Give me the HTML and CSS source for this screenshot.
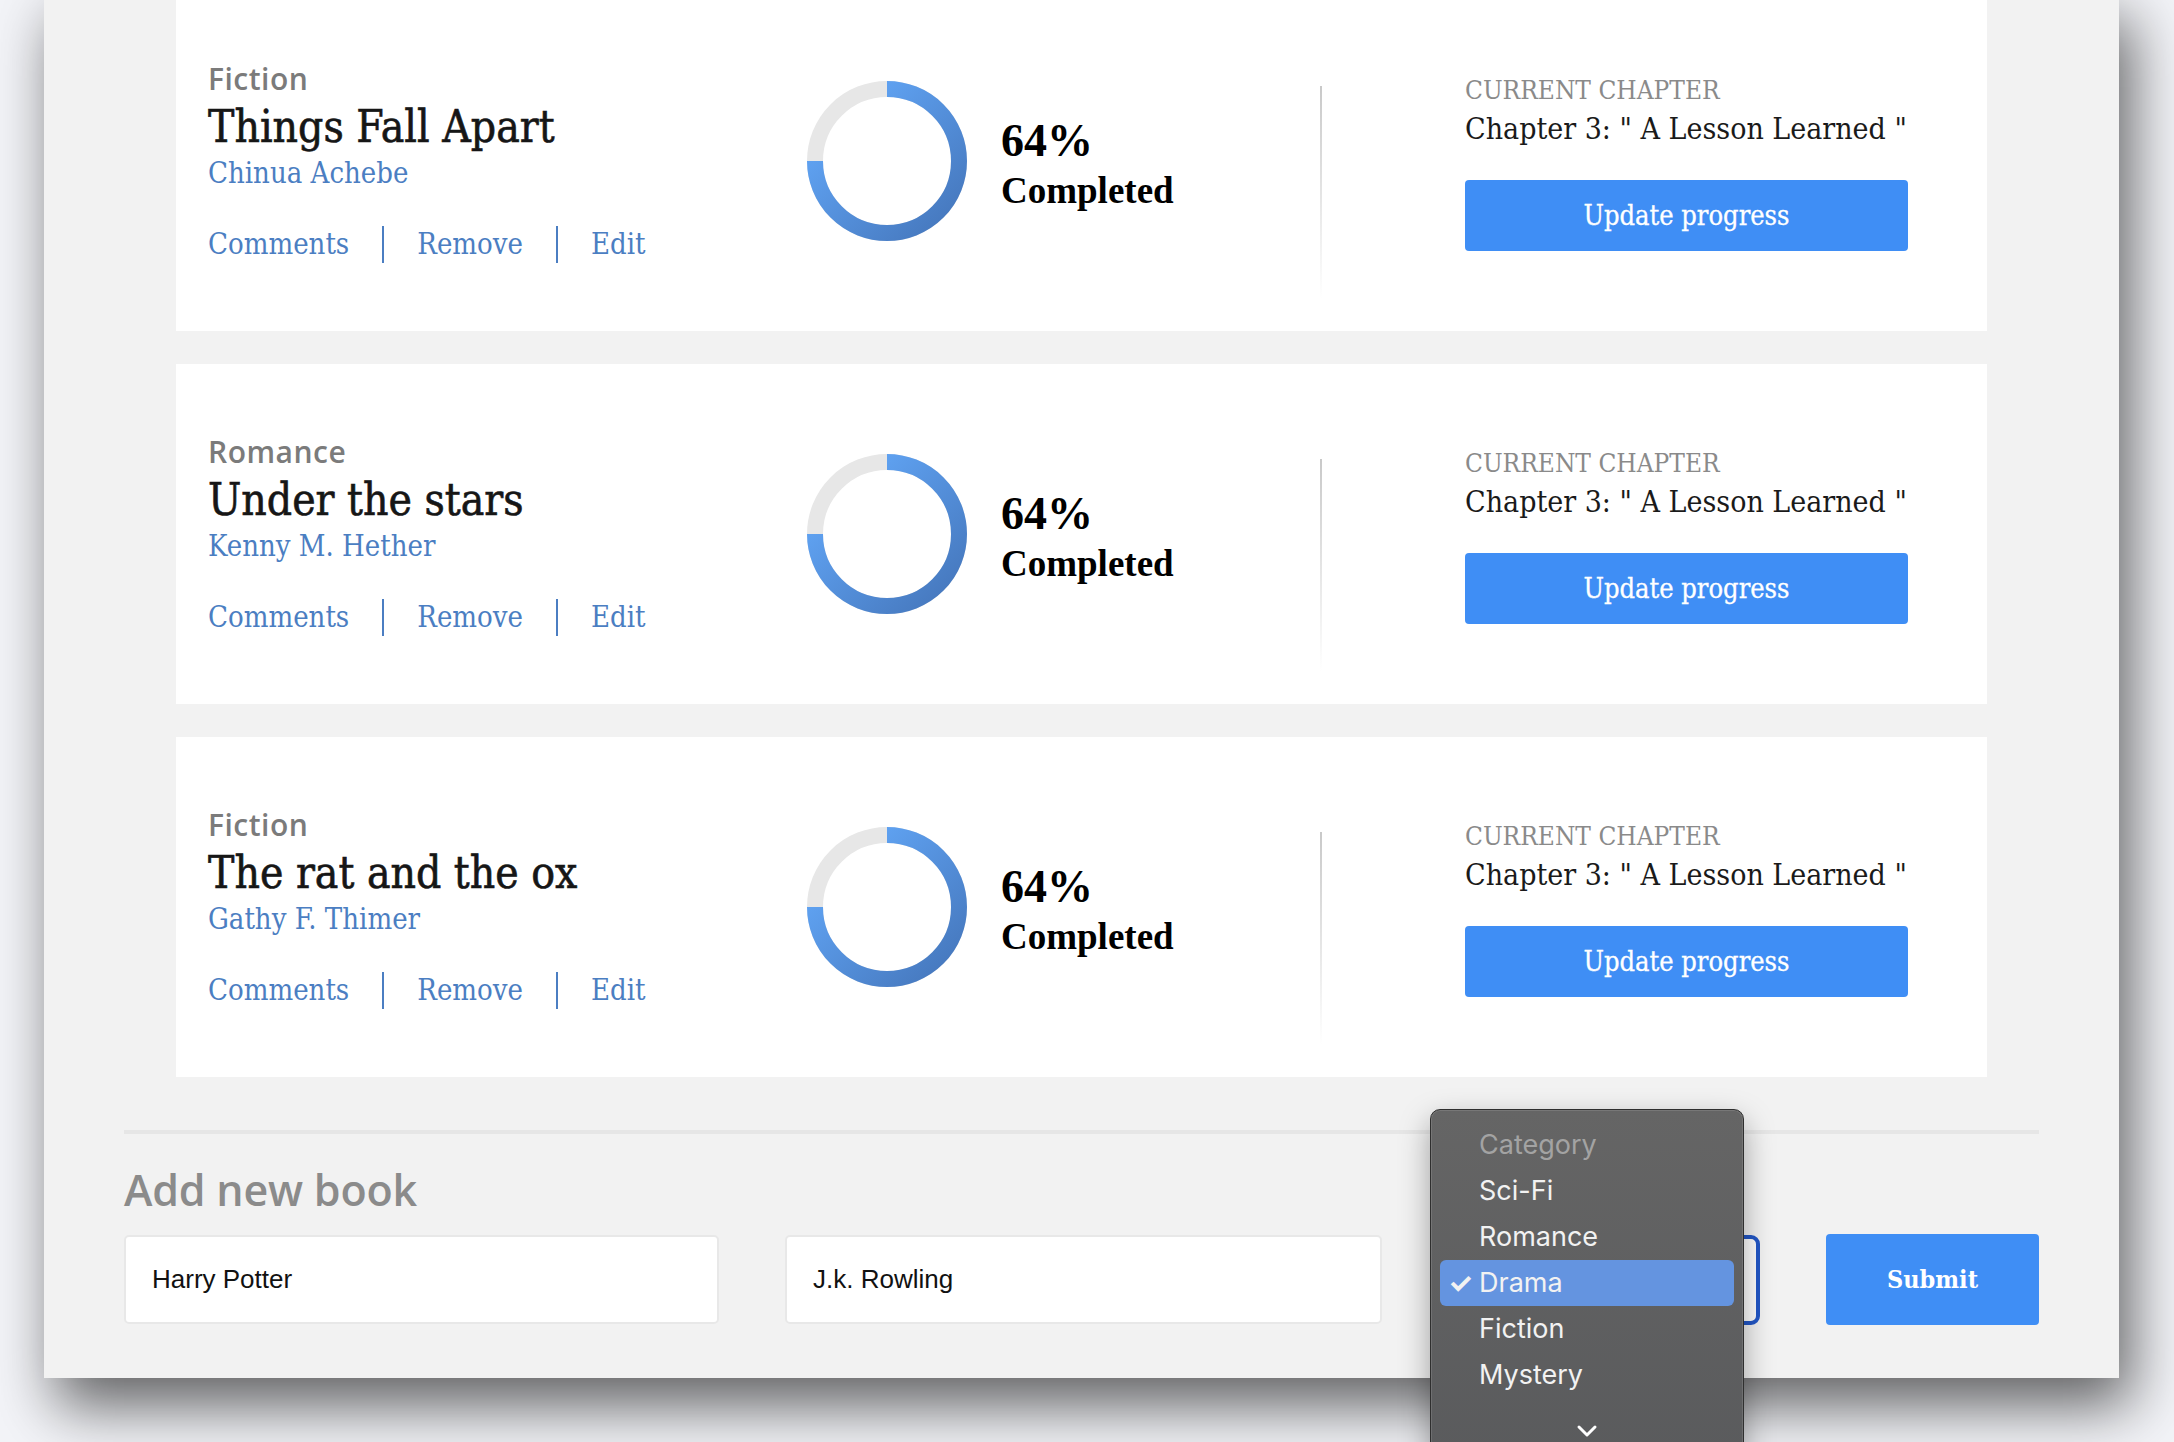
FILE: index.html
```html
<!DOCTYPE html>
<html lang="en">
<head>
<meta charset="utf-8">
<title>Reading list</title>
<link rel="stylesheet" href="styles.css">
</head>
<body>
<main class="panel">
  <section class="books">
    <article class="book-card">
      <div class="book-info">
        <div class="category">Fiction</div>
        <h2 class="title">Things Fall Apart</h2>
        <div class="author">Chinua Achebe</div>
        <nav class="actions"><a class="action">Comments</a><a class="action">Remove</a><a class="action">Edit</a></nav>
      </div>
      <div class="ring">
        <svg width="160" height="160" viewBox="0 0 160 160">
          <defs><linearGradient id="rg1" gradientUnits="userSpaceOnUse" x1="10" y1="10" x2="150" y2="150"><stop offset="0" stop-color="#66adff"/><stop offset="1" stop-color="#4475ba"/></linearGradient></defs>
          <circle cx="80" cy="80" r="72" fill="none" stroke="#e7e7e7" stroke-width="16"/>
          <path d="M80 8 A72 72 0 1 1 8 80" fill="none" stroke="url(#rg1)" stroke-width="16"/>
        </svg>
      </div>
      <div class="progress-text"><div class="pct">64%</div><div class="done">Completed</div></div>
      <div class="vdivider"></div>
      <div class="chapter">
        <div class="chapter-label">CURRENT CHAPTER</div>
        <div class="chapter-name">Chapter 3: " A Lesson Learned "</div>
        <button class="btn">Update progress</button>
      </div>
    </article>

    <article class="book-card">
      <div class="book-info">
        <div class="category">Romance</div>
        <h2 class="title">Under the stars</h2>
        <div class="author">Kenny M. Hether</div>
        <nav class="actions"><a class="action">Comments</a><a class="action">Remove</a><a class="action">Edit</a></nav>
      </div>
      <div class="ring">
        <svg width="160" height="160" viewBox="0 0 160 160">
          <defs><linearGradient id="rg2" gradientUnits="userSpaceOnUse" x1="10" y1="10" x2="150" y2="150"><stop offset="0" stop-color="#66adff"/><stop offset="1" stop-color="#4475ba"/></linearGradient></defs>
          <circle cx="80" cy="80" r="72" fill="none" stroke="#e7e7e7" stroke-width="16"/>
          <path d="M80 8 A72 72 0 1 1 8 80" fill="none" stroke="url(#rg2)" stroke-width="16"/>
        </svg>
      </div>
      <div class="progress-text"><div class="pct">64%</div><div class="done">Completed</div></div>
      <div class="vdivider"></div>
      <div class="chapter">
        <div class="chapter-label">CURRENT CHAPTER</div>
        <div class="chapter-name">Chapter 3: " A Lesson Learned "</div>
        <button class="btn">Update progress</button>
      </div>
    </article>

    <article class="book-card">
      <div class="book-info">
        <div class="category">Fiction</div>
        <h2 class="title">The rat and the ox</h2>
        <div class="author">Gathy F. Thimer</div>
        <nav class="actions"><a class="action">Comments</a><a class="action">Remove</a><a class="action">Edit</a></nav>
      </div>
      <div class="ring">
        <svg width="160" height="160" viewBox="0 0 160 160">
          <defs><linearGradient id="rg3" gradientUnits="userSpaceOnUse" x1="10" y1="10" x2="150" y2="150"><stop offset="0" stop-color="#66adff"/><stop offset="1" stop-color="#4475ba"/></linearGradient></defs>
          <circle cx="80" cy="80" r="72" fill="none" stroke="#e7e7e7" stroke-width="16"/>
          <path d="M80 8 A72 72 0 1 1 8 80" fill="none" stroke="url(#rg3)" stroke-width="16"/>
        </svg>
      </div>
      <div class="progress-text"><div class="pct">64%</div><div class="done">Completed</div></div>
      <div class="vdivider"></div>
      <div class="chapter">
        <div class="chapter-label">CURRENT CHAPTER</div>
        <div class="chapter-name">Chapter 3: " A Lesson Learned "</div>
        <button class="btn">Update progress</button>
      </div>
    </article>
  </section>

  <section class="add-book">
    <h3 class="add-title">Add new book</h3>
    <form class="form-row">
      <div class="field field-title">Harry Potter</div>
      <div class="field field-author">J.k. Rowling</div>
      <div class="select-wrap">
        <div class="select-box"></div>
        <div class="menu">
          <div class="menu-item disabled">Category</div>
          <div class="menu-item">Sci-Fi</div>
          <div class="menu-item">Romance</div>
          <div class="menu-item selected"><span class="check">✓</span>Drama</div>
          <div class="menu-item">Fiction</div>
          <div class="menu-item">Mystery</div>
          <div class="menu-scroll">
            <svg width="22" height="14" viewBox="0 0 22 14"><path d="M3 3 L11 11 L19 3" fill="none" stroke="#ffffff" stroke-width="3" stroke-linecap="round" stroke-linejoin="round"/></svg>
          </div>
        </div>
      </div>
      <button class="submit" type="button">Submit</button>
    </form>
  </section>
</main>
</body>
</html>
```
FILE: styles.css
```css
* { box-sizing: border-box; }
html, body { margin: 0; padding: 0; }
body {
  width: 2174px;
  height: 1442px;
  overflow: hidden;
  background: #f3f4f8;
  font-family: "DejaVu Serif", "Liberation Serif", serif;
  font-stretch: condensed;
}

.panel {
  width: 2075px;
  margin: -9px 0 0 44px;
  padding: 0 80px 53px 80px;
  background: #f2f2f2;
  box-shadow: 12px 28px 56px rgba(0, 0, 0, 0.6);
}

.books {
  display: flex;
  flex-direction: column;
  gap: 33px;
}

.book-card {
  width: 1811px;
  height: 340px;
  margin: 0 auto;
  background: #ffffff;
  display: flex;
  align-items: center;
  padding: 0 79px 0 32px;
}

.book-info {
  flex: 0 0 599px;
  align-self: flex-start;
  padding-top: 70px;
  display: flex;
  flex-direction: column;
}
.category {
  font-family: "Open Sans", "Noto Sans", sans-serif;
  font-stretch: normal;
  font-weight: 600;
  font-size: 30px;
  letter-spacing: 0.5px;
  line-height: 36px;
  color: #7b7b7b;
}
.title {
  margin: 5px 0 0;
  font-weight: 400;
  font-size: 44px;
  line-height: 50px;
  color: #161616;
  -webkit-text-stroke: 0.6px #161616;
}
.author {
  margin-top: 3px;
  font-size: 29px;
  line-height: 36px;
  color: #4b7ec2;
}
.actions {
  display: flex;
  margin-top: 35px;
}
.action {
  font-size: 29px;
  line-height: 37px;
  color: #4b7ec2;
  padding: 0 33px;
  border-left: 2px solid #4b7ec2;
}
.action:first-child { padding-left: 0; border-left: 0; }

.ring {
  flex: 0 0 160px;
  height: 160px;
}
.ring svg { display: block; }

.progress-text {
  flex: 0 0 319px;
  align-self: flex-start;
  padding-top: 126px;
  margin-left: 34px;
  font-family: "Liberation Serif", serif;
  font-stretch: normal;
  font-weight: 700;
  color: #000000;
}
.pct { font-size: 46px; line-height: 48px; }
.done { margin-top: 4px; font-size: 37px; line-height: 44px; }

.vdivider {
  flex: 0 0 2px;
  align-self: flex-start;
  margin-top: 95px;
  height: 213px;
  background: linear-gradient(#c9c9c9, rgba(255,255,255,0));
}

.chapter {
  flex: 0 0 443px;
  align-self: flex-start;
  padding-top: 84px;
  margin-left: 143px;
  display: flex;
  flex-direction: column;
}
.chapter-label {
  font-size: 26px;
  line-height: 30px;
  color: #8a8a8a;
}
.chapter-name {
  margin-top: 5px;
  font-size: 30px;
  line-height: 38px;
  color: #1a1a1a;
  white-space: nowrap;
}
.btn {
  margin-top: 32px;
  width: 443px;
  height: 71px;
  border: 0;
  border-radius: 4px;
  background: #3f8ef5;
  color: #ffffff;
  font-family: "DejaVu Serif", serif;
  font-stretch: condensed;
  font-size: 27px;
  -webkit-text-stroke: 0.3px #ffffff;
}

.add-book {
  margin-top: 53px;
  border-top: 4px solid #e6e6e6;
}
.add-title {
  margin: 29px 0 0;
  font-family: "Open Sans", "Noto Sans", sans-serif;
  font-stretch: normal;
  font-weight: 600;
  font-size: 43px;
  line-height: 54px;
  color: #8b8b8b;
  letter-spacing: -0.2px;
}
.form-row {
  margin: 17px 0 0;
  display: flex;
  justify-content: space-between;
  align-items: center;
}
.field {
  height: 89px;
  background: #ffffff;
  border: 2px solid #e8e8e8;
  border-radius: 5px;
  padding-left: 26px;
  display: flex;
  align-items: center;
  font-family: "Liberation Sans", Arial, sans-serif;
  font-stretch: normal;
  font-size: 26px;
  color: #111111;
}
.field-title { width: 595px; }
.field-author { width: 597px; }

.select-wrap {
  position: relative;
  width: 312px;
  height: 90px;
}
.select-box {
  width: 100%;
  height: 100%;
  background: #ffffff;
  border: 4px solid #2257c7;
  border-radius: 9px;
}

.menu {
  position: absolute;
  left: -18px;
  top: -126px;
  width: 314px;
  height: 380px;
  padding-top: 12px;
  background: linear-gradient(#656565, #595a5c);
  border: 1px solid #2f2f2f;
  box-shadow: inset 0 0 0 1px rgba(255,255,255,0.12), 0 12px 30px rgba(0,0,0,0.35);
  border-radius: 10px;
  font-family: "Inter", "Noto Sans", sans-serif;
  font-stretch: normal;
  font-size: 27px;
  color: #f2f2f2;
}
.menu-item {
  position: relative;
  height: 46px;
  margin: 0 9px;
  padding-left: 39px;
  display: flex;
  align-items: center;
  border-radius: 6px;
}
.menu-item.disabled { color: #a3a3a3; }
.menu-item.selected { background: #6494e0; }
.check {
  position: absolute;
  left: 8px;
  font-size: 28px;
  font-weight: 700;
}
.menu-scroll {
  margin-top: 26px;
  display: flex;
  justify-content: center;
}
.menu-scroll svg { display: block; }

.submit {
  width: 213px;
  height: 91px;
  border: 0;
  border-radius: 4px;
  background: #3f8ef5;
  color: #ffffff;
  font-family: "DejaVu Serif", serif;
  font-stretch: condensed;
  font-weight: 700;
  font-size: 25px;
}
```
